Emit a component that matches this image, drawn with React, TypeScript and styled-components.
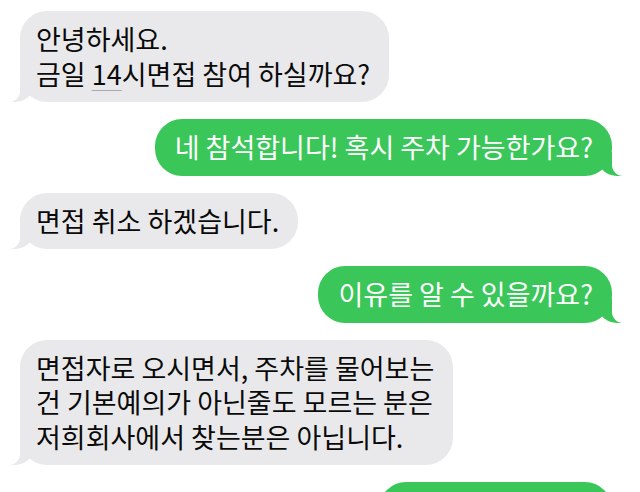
import React from "react";
import styled, { createGlobalStyle, css } from "styled-components";

const Global = createGlobalStyle`
  html, body { margin: 0; padding: 0; background: #ffffff; }
  body { overflow: hidden; }
`;

const Thread = styled.div`
  box-sizing: border-box;
  width: 640px;
  height: 492px;
  overflow: hidden;
  display: flex;
  flex-direction: column;
  gap: 17px;
  padding: 11px 28px 0 20px;
  background: #ffffff;
  font-family: "Noto Sans CJK KR", "Noto Sans", sans-serif;
`;

type Side = "them" | "me";

const Bubble = styled.div<{ $side: Side; $stubWidth?: number }>`
  position: relative;
  flex: none;
  box-sizing: border-box;
  font-size: 27px;
  line-height: 34.5px;
  padding: 11px 19px 11px 20px;
  border-radius: 27px;
  white-space: nowrap;
  ${(p) =>
    p.$stubWidth
      ? css`
          width: ${p.$stubWidth}px;
          height: 57px;
        `
      : ""}

  &::before,
  &::after {
    content: "";
    position: absolute;
    bottom: 0;
    height: 24px;
  }

  ${(p) =>
    p.$side === "them"
      ? css`
          align-self: flex-start;
          background: #e9e9eb;
          color: #0a0a0a;
          padding-left: 16px;
          &::before {
            left: -11px;
            width: 24px;
            background: #e9e9eb;
            border-bottom-right-radius: 18px 15px;
          }
          &::after {
            left: -26px;
            width: 26px;
            background: #ffffff;
            border-bottom-right-radius: 11px;
          }
        `
      : css`
          align-self: flex-end;
          background: #3bc65a;
          color: #ffffff;
          &::before {
            right: -11px;
            width: 24px;
            background: #3bc65a;
            border-bottom-left-radius: 18px 15px;
          }
          &::after {
            right: -26px;
            width: 26px;
            background: #ffffff;
            border-bottom-left-radius: 11px;
          }
        `}
`;

const Detected = styled.span`
  text-decoration: underline;
  text-decoration-color: #a9a9ae;
  text-decoration-thickness: 1px;
  text-underline-offset: 5px;
`;

const Line = styled.span`
  display: block;
`;

export default function App() {
  return (
    <>
      <Global />
      <Thread>
        <Bubble $side="them">
          <Line>안녕하세요.</Line>
          <Line>
            금일 <Detected>14</Detected>시면접 참여 하실까요?
          </Line>
        </Bubble>
        <Bubble $side="me">네 참석합니다! 혹시 주차 가능한가요?</Bubble>
        <Bubble $side="them">면접 취소 하겠습니다.</Bubble>
        <Bubble $side="me">이유를 알 수 있을까요?</Bubble>
        <Bubble $side="them">
          <Line>면접자로 오시면서, 주차를 물어보는</Line>
          <Line>건 기본예의가 아닌줄도 모르는 분은</Line>
          <Line>저희회사에서 찾는분은 아닙니다.</Line>
        </Bubble>
        <Bubble $side="me" $stubWidth={233} aria-hidden="true" />
      </Thread>
    </>
  );
}
